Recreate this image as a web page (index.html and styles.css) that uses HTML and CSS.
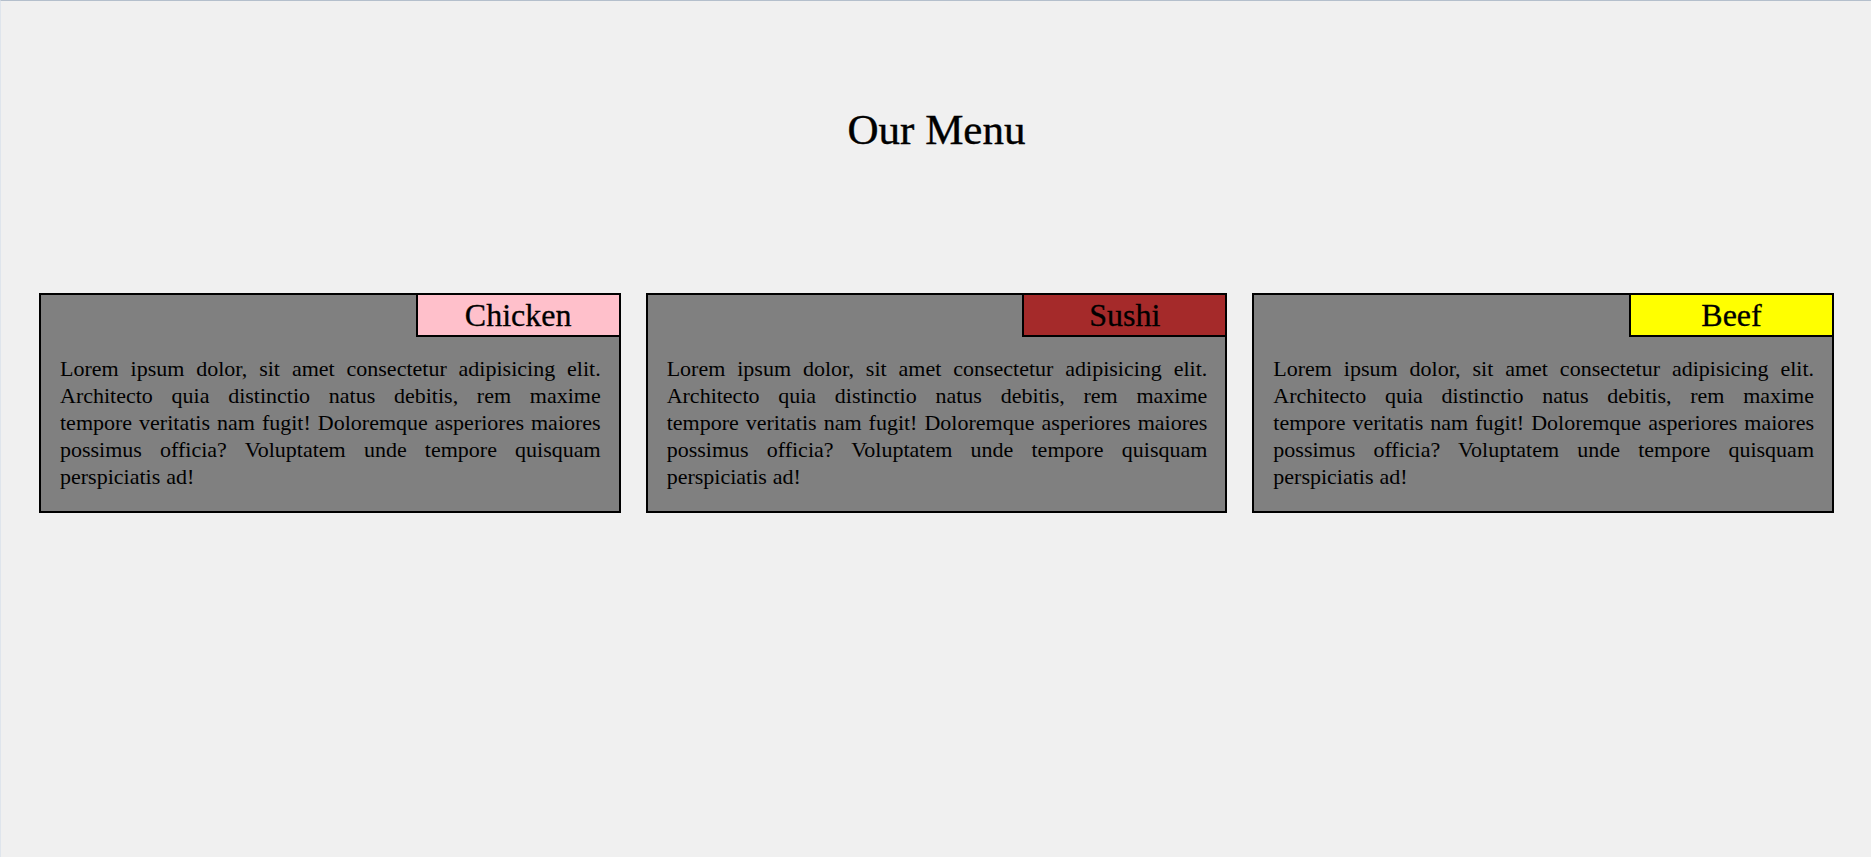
FILE: index.html
```html
<!DOCTYPE html>
<html lang="en">
<head>
<meta charset="utf-8">
<title>Our Menu</title>
<link rel="stylesheet" href="styles.css">
</head>
<body>
<main class="page">
  <h1 class="title">Our Menu</h1>
  <section class="menu">
    <article class="card">
      <div class="card-head"><h2 class="tag tag-chicken">Chicken</h2></div>
      <p class="card-text">Lorem ipsum dolor, sit amet consectetur adipisicing elit. Architecto quia distinctio natus debitis, rem maxime tempore veritatis nam fugit! Doloremque asperiores maiores possimus officia? Voluptatem unde tempore quisquam perspiciatis ad!</p>
    </article>
    <article class="card">
      <div class="card-head"><h2 class="tag tag-sushi">Sushi</h2></div>
      <p class="card-text">Lorem ipsum dolor, sit amet consectetur adipisicing elit. Architecto quia distinctio natus debitis, rem maxime tempore veritatis nam fugit! Doloremque asperiores maiores possimus officia? Voluptatem unde tempore quisquam perspiciatis ad!</p>
    </article>
    <article class="card">
      <div class="card-head"><h2 class="tag tag-beef">Beef</h2></div>
      <p class="card-text">Lorem ipsum dolor, sit amet consectetur adipisicing elit. Architecto quia distinctio natus debitis, rem maxime tempore veritatis nam fugit! Doloremque asperiores maiores possimus officia? Voluptatem unde tempore quisquam perspiciatis ad!</p>
    </article>
  </section>
</main>
</body>
</html>
```
FILE: styles.css
```css
* { box-sizing: border-box; }

html, body { height: 100%; }

body {
  margin: 0;
  background: #f0f0f0;
  border-top: 1px solid #b4bfcc;
  border-left: 1px solid #dfe5ec;
  font-family: "Liberation Serif", "Times New Roman", serif;
  color: #000;
}

.page {
  padding: 104px 37px 0 38px;
}

.title {
  margin: 0;
  font-size: 43px;
  line-height: 50px;
  font-weight: normal;
  text-align: center;
  -webkit-text-stroke: 0.4px #000;
}

.menu {
  margin-top: 138px;
  display: grid;
  grid-template-columns: repeat(3, 1fr);
  gap: 25px;
}

.card {
  background: #808080;
  border: 2px solid #000;
  padding-bottom: 21px;
}

.card-head {
  display: flex;
  justify-content: flex-end;
}

.tag {
  margin: -2px -2px 0 0;
  width: 205px;
  height: 44px;
  border: 2px solid #000;
  font-size: 32px;
  line-height: 40px;
  font-weight: normal;
  text-align: center;
  -webkit-text-stroke: 0.3px #000;
}

.tag-chicken { background: #ffc0cb; }
.tag-sushi { background: #a52a2a; }
.tag-beef { background: #ffff00; }

.card-text {
  margin: 18px 0 0;
  padding: 0 18px 0 19px;
  font-size: 22px;
  line-height: 27px;
  word-spacing: 0.5px;
  text-align: justify;
}
```
